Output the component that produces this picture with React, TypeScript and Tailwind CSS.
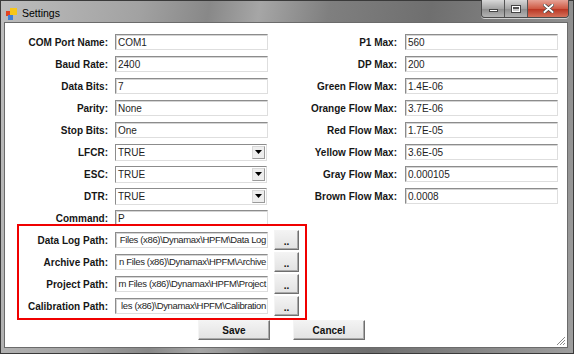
const leftFields = [
  { label: "COM Port Name:", value: "COM1" },
  { label: "Baud Rate:", value: "2400" },
  { label: "Data Bits:", value: "7" },
  { label: "Parity:", value: "None" },
  { label: "Stop Bits:", value: "One" },
];

const combos = [
  { label: "LFCR:", value: "TRUE" },
  { label: "ESC:", value: "TRUE" },
  { label: "DTR:", value: "TRUE" },
];

// the boxes are scrolled to the end of each path, so only the tail shows
const paths = [
  { label: "Data Log Path:", value: "Files (x86)\\Dynamax\\HPFM\\Data Log" },
  { label: "Archive Path:", value: "n Files (x86)\\Dynamax\\HPFM\\Archive" },
  { label: "Project Path:", value: "m Files (x86)\\Dynamax\\HPFM\\Project" },
  { label: "Calibration Path:", value: "les (x86)\\Dynamax\\HPFM\\Calibration" },
];

const rightFields = [
  { label: "P1 Max:", value: "560" },
  { label: "DP Max:", value: "200" },
  { label: "Green Flow Max:", value: "1.4E-06" },
  { label: "Orange Flow Max:", value: "3.7E-06" },
  { label: "Red Flow Max:", value: "1.7E-05" },
  { label: "Yellow Flow Max:", value: "3.6E-05" },
  { label: "Gray Flow Max:", value: "0.000105" },
  { label: "Brown Flow Max:", value: "0.0008" },
];

const boxClass =
  "flex h-[16px] w-[153px] items-center overflow-hidden whitespace-nowrap border border-t-[#8c8c8c] border-l-[#8c8c8c] border-r-[#dedede] border-b-[#dedede] bg-white pl-[2px] text-[10px] text-[#1e1e1e] shadow-[inset_1px_1px_0_#d4d4d4]";

const buttonClass =
  "flex items-center justify-center border border-t-[#f4f4f4] border-l-[#f4f4f4] border-r-[#6f6f6f] border-b-[#6f6f6f] bg-[linear-gradient(#f3f3f3,#e2e2e2)] text-[10px] font-bold text-[#111] shadow-[inset_-1px_-1px_0_#a9a9a9]";

function Label({ text, width }: { text: string; width: string }) {
  return <div className={`${width} text-right text-[10px] font-bold text-[#161616]`}>{text}</div>;
}

function TextBox({ value }: { value: string }) {
  return <div className={`ml-[7px] ${boxClass}`}>{value}</div>;
}

function ComboBox({ value }: { value: string }) {
  return (
    <div className="ml-[7px] flex h-[17px] w-[152px] items-center justify-between border border-t-[#8c8c8c] border-l-[#8c8c8c] border-r-[#dedede] border-b-[#dedede] bg-white pl-[2px] text-[10px] text-[#1e1e1e]">
      <span>{value}</span>
      <div className="mr-[1px] flex h-[13px] w-[13px] items-center justify-center border border-[#d8d8d8] border-r-[#9a9a9a] border-b-[#9a9a9a] bg-[#eeeeee]">
        <svg width="7" height="4" viewBox="0 0 7 4">
          <polygon points="0,0 7,0 3.5,4" fill="#000" />
        </svg>
      </div>
    </div>
  );
}

function PathBox({ value }: { value: string }) {
  return (
    <div className={`ml-[7px] justify-end pr-[1px] ${boxClass}`}>
      <span className="text-[9.5px] tracking-[-0.35px]">{value}</span>
    </div>
  );
}

export default function App() {
  return (
    <div className="h-[354px] w-[574px] bg-white font-['Liberation_Sans',Arial,sans-serif]">
      <div className="flex h-full w-full flex-col border border-[#3a3a3a] bg-[linear-gradient(100deg,#bdbdbd_0%,#a2a2a2_22%,#888_33%,#a6a6a6_41%,#7f7f7f_52%,#6f6f6f_68%,#858585_84%,#9e9e9e_100%)]">
        <div className="flex h-[21px] shrink-0 items-start">
          <div className="flex items-center pl-[5px] pt-[5px]">
            <svg width="11" height="12" viewBox="0 0 11 12">
              <rect x="0" y="3" width="5" height="5" fill="#e2421f" />
              <rect x="4" y="0" width="7" height="7" fill="#f6c61a" />
              <rect x="2" y="7" width="5" height="5" fill="#3f7fd6" />
            </svg>
            <span className="ml-[5px] text-[10.5px] text-black">Settings</span>
          </div>
          <div className="ml-auto mr-[4px] -mt-[1px] flex h-[18px] overflow-hidden rounded-b-[4px] border border-t-0 border-[#4a4a4a] shadow-[0_1px_0_#d0d0d0]">
            <div className="flex w-[23px] items-center justify-center border-r border-[#555] bg-[linear-gradient(#d8d8d8,#a5a5a5_50%,#8c8c8c_51%,#b4b4b4)]">
              <div className="mt-[4px] h-[3px] w-[9px] border border-[#444] bg-white" />
            </div>
            <div className="flex w-[23px] items-center justify-center border-r border-[#555] bg-[linear-gradient(#d8d8d8,#a5a5a5_50%,#8c8c8c_51%,#b4b4b4)]">
              <div className="h-[8px] w-[10px] border border-[#444] bg-white p-[1px]">
                <div className="h-full w-full border-t-2 border-[#555] bg-[#ccc]" />
              </div>
            </div>
            <div className="flex w-[40px] items-center justify-center bg-[linear-gradient(#e6a396,#cf5a45_50%,#b8321f_51%,#d4705a)]">
              <svg width="11" height="9" viewBox="0 0 11 9">
                <path d="M1.5 1 L9.5 8 M9.5 1 L1.5 8" stroke="#444" strokeWidth="3.4" strokeLinecap="round" />
                <path d="M1.5 1 L9.5 8 M9.5 1 L1.5 8" stroke="#fff" strokeWidth="2" strokeLinecap="round" />
              </svg>
            </div>
          </div>
        </div>

        <div className="flex flex-1 pb-[5px] pl-[3px] pr-[5px]">
          <div className="relative flex-1 border border-[#6b6b6b] bg-white pt-[8px]">
            <div className="flex">
              <div className="flex w-[294px] flex-col">
                {leftFields.map((f) => (
                  <div key={f.label} className="flex h-[22px] items-center">
                    <Label text={f.label} width="w-[103px]" />
                    <TextBox value={f.value} />
                  </div>
                ))}
                {combos.map((f) => (
                  <div key={f.label} className="flex h-[22px] items-center">
                    <Label text={f.label} width="w-[103px]" />
                    <ComboBox value={f.value} />
                  </div>
                ))}
                <div className="flex h-[22px] items-center">
                  <Label text="Command:" width="w-[103px]" />
                  <TextBox value="P" />
                </div>
                {paths.map((f) => (
                  <div key={f.label} className="flex h-[22px] items-center">
                    <Label text={f.label} width="w-[103px]" />
                    <PathBox value={f.value} />
                    <div className={`ml-[6px] h-[20px] w-[25px] pt-[3px] ${buttonClass}`}>..</div>
                  </div>
                ))}
              </div>
              <div className="flex flex-col">
                {rightFields.map((f) => (
                  <div key={f.label} className="flex h-[22px] items-center">
                    <Label text={f.label} width="w-[98px]" />
                    <div className={`ml-[8px] ${boxClass}`}>{f.value}</div>
                  </div>
                ))}
              </div>
            </div>

            <div className="mt-[3px] flex gap-[23px] pl-[193px]">
              <div className={`h-[20px] w-[72px] ${buttonClass}`}>Save</div>
              <div className={`h-[20px] w-[72px] ${buttonClass}`}>Cancel</div>
            </div>

            <div className="pointer-events-none absolute left-[12px] top-[201px] h-[96px] w-[290px] border-2 border-[#f00000]" />

            <svg className="absolute bottom-[1px] right-[1px]" width="11" height="11" viewBox="0 0 11 11">
              <path d="M10 2 L2 10 M10 5 L5 10 M10 8 L8 10" stroke="#8a8a8a" strokeWidth="1" />
              <path d="M11 3 L3 11 M11 6 L6 11 M11 9 L9 11" stroke="#fff" strokeWidth="1" />
            </svg>
          </div>
        </div>
      </div>
    </div>
  );
}
